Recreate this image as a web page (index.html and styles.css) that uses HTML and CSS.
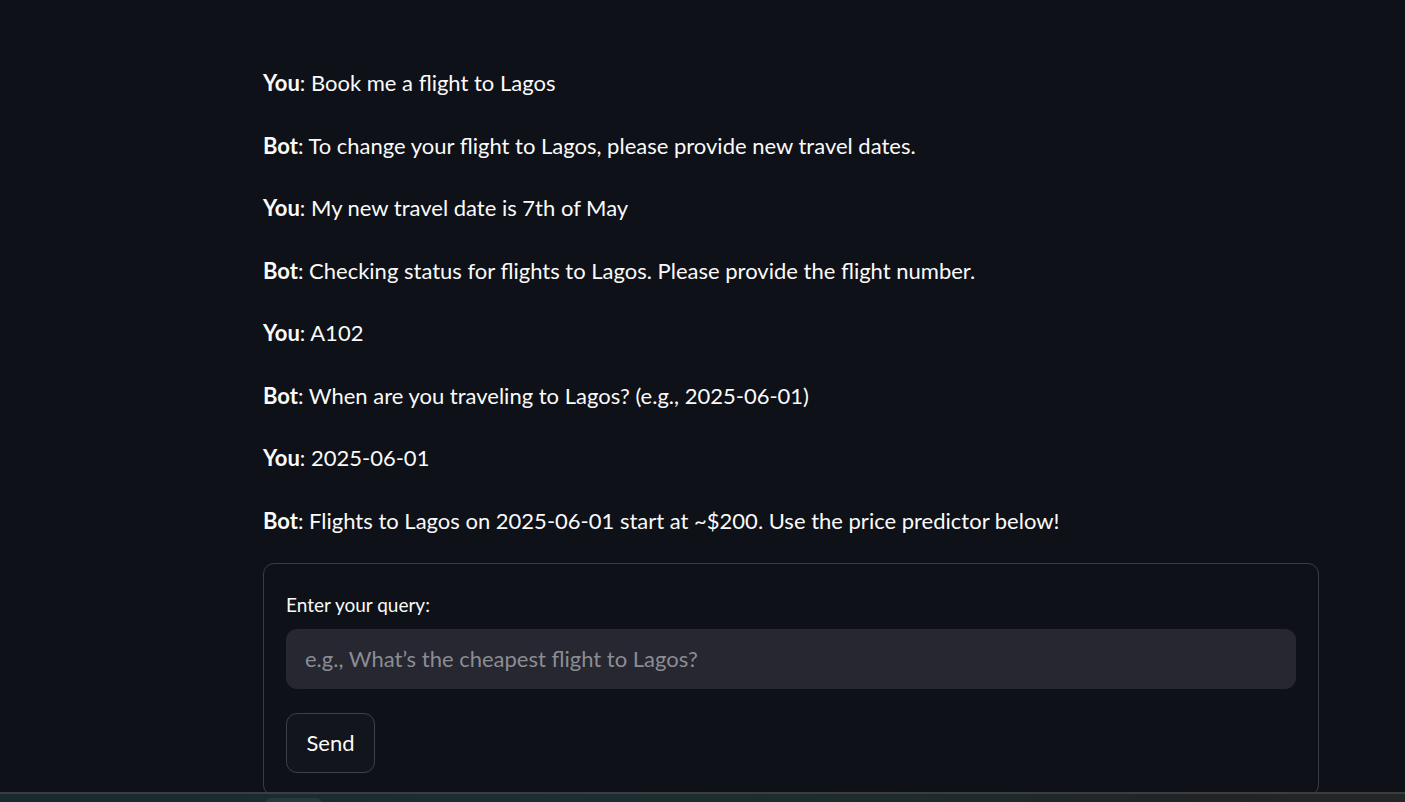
FILE: index.html
```html
<!DOCTYPE html>
<html lang="en">
<head>
<meta charset="utf-8">
<title>Flight Chatbot</title>
<link rel="stylesheet" href="styles.css">
</head>
<body>
<main class="main">
  <div class="chat">
    <p class="msg"><strong>You</strong>: Book me a flight to Lagos</p>
    <p class="msg"><strong>Bot</strong>: To change your flight to Lagos, please provide new travel dates.</p>
    <p class="msg"><strong>You</strong>: My new travel date is 7th of May</p>
    <p class="msg"><strong>Bot</strong>: Checking status for flights to Lagos. Please provide the flight number.</p>
    <p class="msg"><strong>You</strong>: A102</p>
    <p class="msg"><strong>Bot</strong>: When are you traveling to Lagos? (e.g., 2025-06-01)</p>
    <p class="msg"><strong>You</strong>: 2025-06-01</p>
    <p class="msg"><strong>Bot</strong>: Flights to Lagos on 2025-06-01 start at ~$200. Use the price predictor below!</p>
  </div>
  <form class="query-form">
    <label class="label" for="q">Enter your query:</label>
    <input class="input" id="q" type="text" placeholder="e.g., What’s the cheapest flight to Lagos?">
    <button class="btn" type="button">Send</button>
  </form>
</main>
<div class="bottom-bar"><div class="bottom-tab"></div></div>
</body>
</html>
```

FILE: styles.css
```css
html, body {
  margin: 0;
  padding: 0;
  height: 100%;
  overflow: hidden;
  background: #0e1117;
}
body {
  font-family: "Lato", "Liberation Sans", sans-serif;
  color: #fafafa;
}
.main {
  margin-left: 263px;
  width: 1056px;
  padding-top: 65px;
}
.chat {
  display: flex;
  flex-direction: column;
  gap: 27.5px;
}
.msg {
  margin: 0;
  font-size: 22px;
  line-height: 35px;
  white-space: nowrap;
}
.msg strong {
  font-weight: 700;
}
.query-form {
  margin-top: 25px;
  border: 1px solid #3a3c43;
  border-radius: 11px;
  padding: 26px 22px 22px;
  display: flex;
  flex-direction: column;
  align-items: flex-start;
}
.label {
  font-size: 19px;
  line-height: 30px;
}
.input {
  box-sizing: border-box;
  margin-top: 9px;
  width: 100%;
  height: 60px;
  border: none;
  border-radius: 11px;
  background: #262730;
  color: #fafafa;
  font-family: inherit;
  font-size: 22px;
  padding: 0 19px;
  outline: none;
}
.input::placeholder {
  color: #8b8d94;
}
.btn {
  margin-top: 24px;
  height: 60px;
  width: 89px;
  border: 1px solid #3e4047;
  border-radius: 11px;
  background: #12151b;
  color: #fafafa;
  font-family: inherit;
  font-size: 22px;
  padding: 0;
}
.bottom-bar {
  position: fixed;
  left: 0;
  right: 0;
  bottom: 0;
  height: 8px;
  border-top: 2px solid #3a3e41;
  background: linear-gradient(90deg, #172a2d 0%, #1b2f33 35%, #1e2c2e 60%, #222426 85%, #242526 100%);
}
.bottom-tab {
  position: absolute;
  left: 265px;
  top: 4px;
  width: 57px;
  height: 10px;
  border-radius: 6px 6px 0 0;
  background: #26393c;
}
```
